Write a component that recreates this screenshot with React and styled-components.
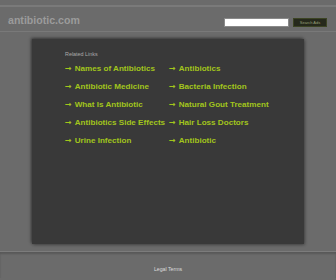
import React from "react";
import styled, { createGlobalStyle } from "styled-components";

const Global = createGlobalStyle`
  html, body { margin: 0; padding: 0; background: #6b6b6b; }
  body { font-family: "Liberation Sans", Arial, sans-serif; width: 336px; height: 280px; overflow: hidden; }
`;

const Page = styled.div`
  padding-top: 5px;
  display: flex;
  flex-direction: column;
`;

const Header = styled.header`
  height: 24px;
  border-top: 2px solid #7a7a7a;
  border-bottom: 1px solid #797979;
  display: flex;
  align-items: flex-start;
  justify-content: space-between;
  padding: 0 9px 0 8px;
`;

const Logo = styled.div`
  font-size: 10.6px;
  font-weight: bold;
  color: #9b9b9b;
  line-height: 12px;
  margin-top: 7px;
`;

const Search = styled.form`
  display: flex;
  align-items: center;
  gap: 4px;
  margin: 11px 0 0 0;
`;

const Input = styled.div`
  width: 63px;
  height: 7px;
  background: #fff;
  border: 1px solid #8a8a8a;
`;

const Button = styled.div`
  width: 32px;
  height: 7px;
  background: #26291c;
  border: 1px solid #3c4424;
  color: #9aa07a;
  font-size: 4px;
  line-height: 7px;
  text-align: center;
`;

const Panel = styled.main`
  margin: 7px 32px 0 32px;
  height: 205px;
  background: #393939;
  box-shadow: -1px -1px 3px rgba(0,0,0,0.45), 1px 1px 3px rgba(0,0,0,0.3);
  padding: 12px 0 0 33px;
  box-sizing: border-box;
`;

const Label = styled.div`
  font-size: 5.4px;
  color: #a9a9a9;
  height: 7px;
  line-height: 7px;
`;

const Links = styled.div`
  display: grid;
  grid-template-columns: 104px 104px;
  grid-auto-rows: 18px;
  margin-top: 1px;
`;

const LinkItem = styled.a`
  display: flex;
  align-items: center;
  gap: 3px;
  color: #a2c51c;
  font-size: 8.1px;
  font-weight: bold;
  text-decoration: none;
  white-space: nowrap;
`;

const Arrow = styled.span`
  font-size: 8px;
  font-family: "DejaVu Sans", sans-serif;
  font-weight: bold;
`;

const Footer = styled.footer`
  margin-top: 7px;
  border-top: 1px solid #7c7c7c;
  box-shadow: inset 0 2px 2px rgba(0,0,0,0.18);
  height: 27px;
  display: flex;
  justify-content: center;
  align-items: flex-start;
  padding-top: 14px;
  box-sizing: border-box;
`;

const Legal = styled.a`
  font-size: 5.2px;
  color: #dcdcdc;
  text-decoration: none;
`;

const links = [
  "Names of Antibiotics", "Antibiotics",
  "Antibiotic Medicine", "Bacteria Infection",
  "What Is Antibiotic", "Natural Gout Treatment",
  "Antibiotics Side Effects", "Hair Loss Doctors",
  "Urine Infection", "Antibiotic",
];

export default function App() {
  return (
    <Page>
      <Global />
      <Header>
        <Logo>antibiotic.com</Logo>
        <Search onSubmit={(e) => e.preventDefault()}>
          <Input />
          <Button>Search Ads</Button>
        </Search>
      </Header>
      <Panel>
        <Label>Related Links</Label>
        <Links>
          {links.map((l, i) => (
            <LinkItem key={i} href="#">
              <Arrow>→</Arrow>
              {l}
            </LinkItem>
          ))}
        </Links>
      </Panel>
      <Footer>
        <Legal href="#">Legal Terms</Legal>
      </Footer>
    </Page>
  );
}
